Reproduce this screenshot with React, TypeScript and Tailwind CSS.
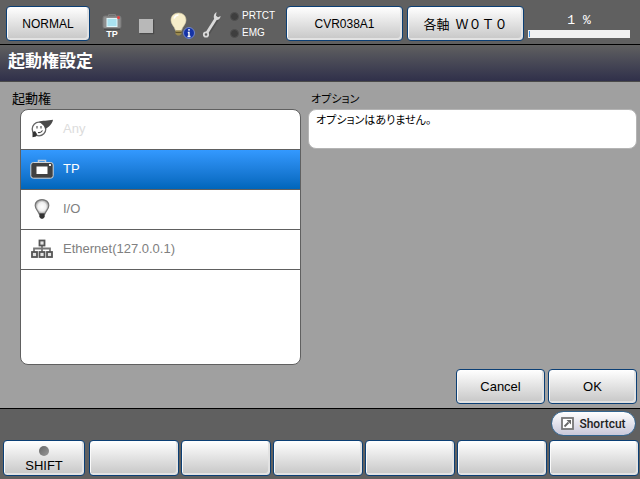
import React from "react";

const FACE =
  "border border-[#0b3f75] rounded-[4px] bg-linear-to-b from-white to-[#c6c6c6] shadow-[inset_1px_0_0_#fafafa,inset_-2px_-2px_0_#e2e2e2] text-black";

function PushButton({ className, children, label }: { className: string; children?: React.ReactNode; label?: string }) {
  return (
    <button type="button" aria-label={label} className={`${FACE} flex flex-col items-center justify-center ${className}`}>
      {children}
    </button>
  );
}

function PendantIcon() {
  return (
    <svg width="20" height="16" viewBox="0 0 20 16" aria-hidden="true">
      <path d="M6.500 2.500V.8h7v1.700" fill="none" stroke="#8d8d8d" strokeWidth="1" />
      <rect x="1" y="2" width="18" height="12.500" rx="2" fill="#8e8e8e" stroke="#777" />
      <path d="M2 15.200h16" stroke="#444" />
      <rect x="5" y="4.500" width="10" height="8" fill="#a9e2f0" stroke="#dff6fa" />
      <circle cx="16.500" cy="3.500" r="1.500" fill="#e84040" />
    </svg>
  );
}

function LampInfoIcon() {
  return (
    <svg width="26" height="28" viewBox="0 0 26 28" aria-hidden="true">
      <path d="M8.500 1C4 1 1 4 1 8.200c0 4.300 3.500 6 4.500 10.300h6c1-4.300 4.500-6 4.500-10.300C16 4 13 1 8.500 1z" fill="#f6edc9" stroke="#d9cfa6" strokeWidth=".6" />
      <path d="M4 6.500C5 4 6.500 3 8.500 3" stroke="#fff" strokeWidth="1.500" fill="none" />
      <path d="M5.500 18.500h6V22L9.500 23.500h-2L5.500 22z" fill="#9b8a4e" />
      <path d="M5.500 20.500h6" stroke="#5e532b" />
      <circle cx="19" cy="21" r="5.500" fill="#1533a6" stroke="#7186c9" strokeWidth="1" />
      <path d="M19 17v1.800M17.800 20.500H19v4M17.500 24.500h3" stroke="#fff" strokeWidth="1.400" fill="none" />
    </svg>
  );
}

function WrenchIcon() {
  return (
    <svg width="20" height="28" viewBox="0 0 20 28" aria-hidden="true">
      <path d="M5 24L15.500 8" stroke="#444" strokeWidth="3.500" opacity=".5" />
      <path d="M4.500 22.500L14 7.500" stroke="#dadada" strokeWidth="2.800" />
      <path d="M14.500 1C12 2.500 11 6 12.500 8c2 2 5.500 1 6.200-3l-2.700 1.200L14 4.800z" fill="#dadada" />
      <circle cx="4" cy="23.500" r="2.200" fill="#606060" stroke="#dadada" strokeWidth="1.800" />
    </svg>
  );
}

function AnyIcon() {
  return (
    <svg width="24" height="20" viewBox="0 0 24 20" aria-hidden="true">
      <circle cx="9" cy="10" r="6.800" fill="#fff" stroke="#666" strokeWidth="1.300" />
      <path d="M9 2.700C12 1.300 18 2 23 .8c-.5 3.700-4.500 8-8 9.200-.3-3.500-3-5-6-7.300z" fill="#4a4a4a" />
      <path d="M7 7v2.500M11 7v2.500M8 13.500c2 .5 3.500-.5 4.500-2" stroke="#444" strokeWidth="1.100" fill="none" />
      <path d="M2.500 13.500l2.500-1.500 2 3-1 2.500-3.500.8z" fill="#333" />
    </svg>
  );
}

function TpIcon() {
  return (
    <svg width="24" height="20" viewBox="0 0 24 20" aria-hidden="true">
      <path d="M8.500 3.500V1.500h7v2" fill="none" stroke="#c5cdd6" strokeWidth="1.500" />
      <rect x=".8" y="3.500" width="22.400" height="15.700" rx="2.500" fill="#414141" stroke="#cfd5db" />
      <rect x="6.500" y="7.500" width="11" height="7.500" fill="#fff" />
      <rect x="19" y="5" width="2" height="2" fill="#eee" />
    </svg>
  );
}

function BulbIcon() {
  return (
    <svg width="24" height="20" viewBox="0 0 24 20" aria-hidden="true">
      <defs>
        <radialGradient id="bulb">
          <stop offset="0" stopColor="#fff" />
          <stop offset=".6" stopColor="#f0f0f0" />
          <stop offset="1" stopColor="#999" />
        </radialGradient>
      </defs>
      <path d="M12 .6C8 .6 5.200 3.200 5.200 6.500c0 3.700 3.300 5.200 3.900 8.500h5.800c.6-3.300 3.900-4.800 3.900-8.500C18.800 3.200 16 .6 12 .6z" fill="url(#bulb)" stroke="#777" strokeWidth="1.200" />
      <path d="M9.300 14.500h5.400V18l-1.700 1.800h-2L9.300 18z" fill="#333" />
    </svg>
  );
}

function NetworkIcon() {
  return (
    <svg width="24" height="20" viewBox="0 0 24 20" aria-hidden="true" fill="#e4e4e4" stroke="#555" strokeWidth="1.800">
      <path d="M12 6v7M4 13V9.500h16V13" fill="none" stroke="#777" />
      <rect x="9.500" y="1.500" width="5" height="5" />
      <rect x="2" y="13" width="5" height="5" />
      <rect x="9.500" y="13" width="5" height="5" />
      <rect x="17" y="13" width="5" height="5" />
    </svg>
  );
}

function Lamp({ label }: { label: string }) {
  return (
    <div className="flex items-center gap-[3px]">
      <span className="size-[9px] rounded-full border border-[#505050] bg-[#3e3e3e]" />
      <span>{label}</span>
    </div>
  );
}

const sources = [
  { name: "Any", icon: <AnyIcon />, row: "text-[#dcdcdc]" },
  { name: "TP", icon: <TpIcon />, row: "text-white bg-linear-to-b from-[#3399ff] to-[#0066bb]" },
  { name: "I/O", icon: <BulbIcon />, row: "text-[#808080]" },
  { name: "Ethernet(127.0.0.1)", icon: <NetworkIcon />, row: "text-[#808080]" },
];

export default function App() {
  return (
    <div className="flex min-h-screen flex-col bg-[#606060] font-['Liberation_Sans','Noto_Sans_CJK_JP',sans-serif] text-[13px] leading-4 text-black">
      <header className="flex h-[45px] items-start border-b border-black pl-[6px] pr-[10px] pt-[6px]">
        <PushButton className="h-[35px] w-[84px] text-[12px]">NORMAL</PushButton>
        <div className="ml-[11px] flex w-[22px] flex-col items-center pt-2">
          <PendantIcon />
          <span className="text-[9px] font-bold leading-[9px] text-white">TP</span>
        </div>
        <div className="ml-[16px] mt-[13px] size-[14px] bg-[#b8b8b8] shadow-[1px_1px_1px_#4a4a4a]" />
        <div className="ml-[17px] mt-[6px]">
          <LampInfoIcon />
        </div>
        <div className="ml-[6px] mt-[5px]">
          <WrenchIcon />
        </div>
        <div className="ml-[8px] mt-[2px] flex w-[56px] flex-col gap-[1px] text-[10px] text-white">
          <Lamp label="PRTCT" />
          <Lamp label="EMG" />
        </div>
        <PushButton className="h-[35px] min-w-0 flex-1 text-[12px]">CVR038A1</PushButton>
        <PushButton className="ml-[4px] h-[35px] min-w-0 flex-1 whitespace-pre font-['Noto_Sans_CJK_JP',sans-serif]">{"各軸  Ｗ０Ｔ０"}</PushButton>
        <div className="ml-[4px] mt-[7px] flex w-[102px] flex-col text-center font-['Liberation_Mono',monospace] text-white">
          <span className="mb-[1px]">1 %</span>
          <div role="progressbar" aria-label="1 %" aria-valuenow={1} className="h-2 bg-[#f0f0f0] p-[1px]">
            <div className="h-full w-[1%] bg-[#3e93e6]" />
          </div>
        </div>
      </header>

      <h1 className="h-[37px] border-b border-[#4a4a4a] bg-linear-to-b from-[#606060] to-[#30304a] px-2 pt-[5px] text-[17px] font-bold leading-6 text-white">
        起動権設定
      </h1>

      <main className="flex flex-1 flex-col bg-[#a0a0a0] pb-[4px] pl-[12px] pr-[3px] pt-[9px]">
        <div className="flex gap-[7px]">
          <section className="w-[289px]">
            <h2 className="mb-[2px]">起動権</h2>
            <ul className="ml-2 h-[256px] overflow-hidden rounded-[8px] border border-[#606060] bg-white">
              {sources.map((s) => (
                <li key={s.name} className="border-b border-[#606060]">
                  <button type="button" className={`flex h-[39px] w-full items-center gap-[9px] px-[9px] pb-[2px] text-left ${s.row}`}>
                    {s.icon}
                    <span>{s.name}</span>
                  </button>
                </li>
              ))}
            </ul>
          </section>
          <section className="flex-1 [font-feature-settings:'palt']">
            <h2 className="mb-[2px] pl-[3px] text-[11px] leading-4">オプション</h2>
            <p className="h-[40px] rounded-[8px] border border-[#b4b4b4] bg-white px-[7px] py-[2px] text-[11px] leading-4">オプションはありません。</p>
          </section>
        </div>
        <div className="mt-auto flex justify-end gap-[3px]">
          <PushButton className="h-[35px] w-[89px]">Cancel</PushButton>
          <PushButton className="h-[35px] w-[89px]">OK</PushButton>
        </div>
      </main>

      <footer className="border-t border-black pb-[3px] pl-[3px] pr-[1px] pt-[2px]">
        <div className="mb-1 flex justify-end pr-[3px]">
          <button
            type="button"
            className="flex h-[25px] w-[85px] items-center justify-center gap-[5px] rounded-full border border-[#34658f] bg-linear-to-b from-white to-[#c9c8da] font-['Roboto',sans-serif] text-[12px] font-medium text-[#222]"
          >
            <svg width="13" height="13" viewBox="0 0 13 13" aria-hidden="true">
              <rect x="1" y="1" width="11" height="11" fill="#fff" stroke="#777" strokeWidth="1.800" />
              <path d="M3.500 9.500l4-4" stroke="#666" strokeWidth="1.800" />
              <path d="M5.500 3h4.500v4.500z" fill="#666" />
            </svg>
            Shortcut
          </button>
        </div>
        <div className="flex gap-[2px]">
          <PushButton className="mr-[2px] h-[36px] w-[82px] pt-[4px]">
            <span className="mb-[2px] size-[10px] rounded-full bg-linear-to-br from-[#666] to-[#999]" />
            <span>SHIFT</span>
          </PushButton>
          {[1, 2, 3, 4, 5, 6].map((n) => (
            <PushButton key={n} label={`F${n}`} className="h-[36px] flex-1" />
          ))}
        </div>
      </footer>
    </div>
  );
}
